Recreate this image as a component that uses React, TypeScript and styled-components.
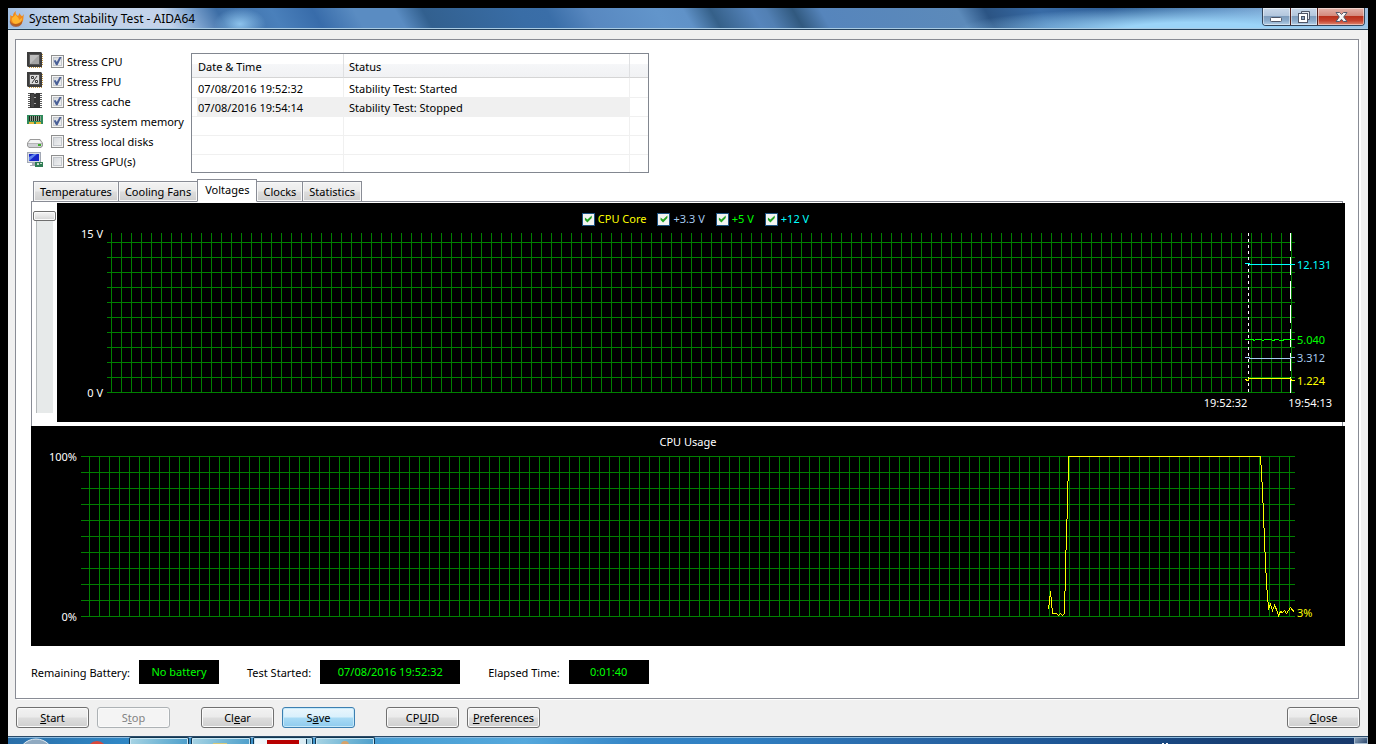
import React, { useState } from "react";
import styled, { createGlobalStyle, css } from "styled-components";

const uiFont = '"Noto Sans", "Open Sans", "Liberation Sans", sans-serif';
const green = "#008000";
const edge = "#898c95";

const GlobalStyle = createGlobalStyle`
  * { box-sizing: border-box; }
  body {
    margin: 0;
    background: #000;
    font: 11px/16px ${uiFont};
    color: #000;
  }
  button, input, table { font: inherit; color: inherit; }
`;

const Desktop = styled.div`
  padding: 8px 8px 0;
`;

const Window = styled.main`
  background: #f0f0f0;
`;

const TitleBar = styled.header`
  display: flex;
  align-items: flex-start;
  justify-content: space-between;
  height: 22px;
  padding: 0 3px 0 1px;
  border-bottom: 1px solid #24415c;
  box-shadow: inset 0 -1px #a9cbe3;
  background:
    radial-gradient(ellipse 26px 16px at 232px 16px, #8cc2ec, transparent),
    radial-gradient(ellipse 240px 22px at calc(100% - 170px) 100%, #9bd4f8 30%, transparent) no-repeat,
    linear-gradient(60deg, #9dbbe0 0%, #c3d3ea 4%, #c3d3ea 12%, #7ea4d0 14%, #3d6ea6 16%, #4a80bb 20%,
      #386caa 23%, #5a8cc2 26%, #5a8cc2 29%, #32608f 31%, #396da6 38%, #3a6ea8 40%, #5888c0 43%,
      #6295cb 48%, #6092c8 50%, #356089 52%, #5685bc 55%, #5280b4 56%, #31597f 58%, #5685bc 60%,
      #5c8aba 70%, #2b5484 72%, #386ba6 76%, #2f5f98 81%, #36689e 83%, #5d8dc0 89%, #7ea8d4 93%, #9fbfe0 100%);
`;

const Caption = styled.div`
  display: flex;
  align-items: center;
  gap: 5px;
  padding-top: 3px;

  h1 { margin: 0; font: 12px/16px ${uiFont}; }
`;

const CaptionButtons = styled.div`
  display: flex;
  height: 18px;
  border: 1px solid #33465c;
  border-top: 0;
  border-radius: 0 0 4px 4px;
  overflow: hidden;
`;

const CaptionButton = styled.button<{ $close?: boolean }>`
  display: flex;
  align-items: center;
  justify-content: center;
  width: ${(p) => (p.$close ? 47 : 27)}px;
  padding: 0;
  border: 0;
  box-shadow: inset 0 0 0 1px rgba(255, 255, 255, 0.45);
  background: ${(p) =>
    p.$close
      ? "linear-gradient(#e3b3aa, #d48a7d 45%, #b8301b 50%, #c5432e 75%, #e08b74)"
      : "linear-gradient(#c9d8ea, #b3c7dd 45%, #7f9dbd 50%, #8caccb 75%, #b6d1e8)"};

  & + & { border-left: 1px solid ${(p) => (p.$close ? "#53201c" : "#4a5f78")}; }
`;

const Panel = styled.section`
  margin: 9px 9px 0 7px;
  padding: 11px 13px 14px 15px;
  border: 1px solid ${edge};
  background: #fff;
  box-shadow: 2px 1px #fff;
`;

const TopRow = styled.div`
  display: flex;
  align-items: flex-end;
`;

const StressList = styled.ul`
  width: 164px;
  margin: 0 0 2px -4px;
  padding: 0;
  list-style: none;
`;

const StressItem = styled.li`
  display: flex;
  align-items: center;
  height: 20px;
  gap: 8px;
  white-space: nowrap;

  label { display: flex; align-items: center; gap: 3px; }
  span { padding-top: 1px; }
  svg { flex: none; }
`;

const Tick = styled.input`
  position: relative;
  flex: none;
  appearance: none;
  width: 13px;
  height: 13px;
  margin: 0;
  border: 1px solid #8e8f8f;
  background: linear-gradient(135deg, #cfd3d8, #f6f6f6);
  box-shadow: inset 0 0 0 1px #f4f4f4, inset 0 0 0 2px #c3c7cc;

  &:checked::after {
    content: "";
    position: absolute;
    inset: 1px;
    background: #4a5f97;
    clip-path: polygon(8% 48%, 28% 40%, 42% 62%, 74% 4%, 96% 4%, 50% 98%, 34% 98%);
  }
`;

const ChartTick = styled(Tick)`
  border-color: #1c5180;
  background: #f3f3f1;
  box-shadow: none;

  &:checked::after {
    background: #21a121;
    clip-path: polygon(12% 34%, 40% 56%, 88% 12%, 88% 40%, 40% 88%, 12% 62%);
  }
`;

const LogFrame = styled.div`
  width: 458px;
  height: 120px;
  border: 1px solid #828790;
  overflow: hidden;
`;

const LogTable = styled.table`
  width: 100%;
  border-collapse: separate;
  border-spacing: 0;
  table-layout: fixed;

  th {
    height: 24px;
    padding: 2px 6px 0;
    font-weight: normal;
    text-align: left;
    border-right: 1px solid #dfe0e2;
    border-bottom: 1px solid #d5d5d5;
    background: linear-gradient(#fff 42%, #f5f6f8 46%, #f1f2f4);
  }
  td {
    height: 19px;
    padding: 2px 6px 0;
    border-right: 1px solid #f0f0f0;
    border-bottom: 1px solid #f0f0f0;
    line-height: 16px;
  }
  tbody tr:first-child td { height: 20px; padding-top: 3px; }
  th + th, td + td { padding-left: 5px; }
  th:last-child, td:last-child { border-right: 0; }
`;

const LogRow = styled.tr<{ $selected?: boolean }>`
  ${(p) =>
    p.$selected &&
    css`
      td:not(:last-child) { background: #f0f0f0; }
      td:first-child { background: linear-gradient(to right, #fff 5px, #f0f0f0 5px); }
    `}
`;

const TabBar = styled.div`
  display: flex;
  align-items: flex-end;
  height: 23px;
  margin: 6px 0 -1px;
  padding-left: 2px;
`;

const Tab = styled.button<{ $active?: boolean }>`
  position: relative;
  height: ${(p) => (p.$active ? 23 : 21)}px;
  padding: ${(p) => (p.$active ? "0 7px 2px" : "0 6px")};
  border: 1px solid ${edge};
  border-bottom-color: ${(p) => (p.$active ? "#fff" : edge)};
  z-index: ${(p) => (p.$active ? 1 : 0)};
  background: ${(p) => (p.$active ? "#fff" : "linear-gradient(#f3f3f3, #ebebeb 48%, #dddddd 52%, #cfcfcf)")};
  box-shadow: ${(p) => (p.$active ? "none" : "inset 0 0 0 1px #f8f8f8")};
  line-height: 19px;
  white-space: nowrap;

  & + & { margin-left: -1px; }
`;

const TabPane = styled.div`
  display: flex;
  align-items: flex-start;
  margin-right: 2px;
  padding: 1px 0 4px 1px;
  border: 1px solid ${edge};
  border-bottom: 0;
`;

const Scale = styled.input`
  flex: none;
  appearance: none;
  writing-mode: vertical-lr;
  width: 23px;
  height: 202px;
  margin: 8px 1px 0 0;
  background: linear-gradient(#b4b8ba, #b4b8ba) 3px 0 / 1px 100% no-repeat,
    linear-gradient(#e7eaea, #e7eaea) 4px 0 / 16px 100% no-repeat;

  &::-webkit-slider-thumb {
    appearance: none;
    width: 23px;
    height: 10px;
    border: 1px solid #6f6f6f;
    border-radius: 2px;
    background: linear-gradient(#f4f4f4, #e6e6e6 50%, #d2d2d2);
    box-shadow: inset 0 0 0 1px #fafafa;
  }
`;

const Chart = styled.figure`
  flex: 1;
  display: grid;
  grid-template-columns: 50px minmax(0, 1fr) 50px;
  margin: 0;
  background: #000;
  color: #fff;
`;

const VoltageChart = styled(Chart)`
  height: 219px;
  margin-right: -3px;
  grid-template-rows: 23px 175px 1fr;
`;

const UsageChart = styled(Chart)`
  height: 220px;
  grid-template-rows: 23px 176px 1fr;
`;

const ChartHead = styled.figcaption`
  grid-column: 1 / -1;
  display: flex;
  justify-content: center;
  padding-top: 8px;
`;

const LegendItem = styled.label<{ $color: string }>`
  display: flex;
  align-items: center;
  gap: 3px;
  height: 16px;
  margin-right: 11px;
  color: ${(p) => p.$color};
`;

const Axis = styled.div`
  display: flex;
  flex-direction: column;
  justify-content: space-between;
  padding-right: 4px;
  text-align: right;
`;

const Plot = styled.div<{ $step: number; $phase: number }>`
  display: flex;
  justify-content: flex-end;
  margin: 7px 0 8px;
  background:
    linear-gradient(to top, ${green} 1px, transparent 1px) left bottom / 100% ${(p) => p.$step}px,
    linear-gradient(to left, ${green} 1px, transparent 1px) right ${(p) => p.$phase}px top / 10px 100%;

  svg { flex: none; display: block; overflow: visible; }
  text { font: 11px ${uiFont}; }
`;

const Times = styled.div`
  grid-column: 1 / -1;
  display: flex;
  justify-content: flex-end;
  gap: 41px;
  margin-top: -5px;
  padding-right: 13px;
  line-height: 14px;
`;

const StatusRow = styled.dl`
  display: flex;
  align-items: center;
  gap: 28px;
  margin: 14px 0 0;
`;

const StatusItem = styled.div`
  display: flex;
  align-items: center;
  gap: 9px;
  white-space: nowrap;

  dt { padding-top: 1px; }
`;

const StatusValue = styled.dd<{ $wide?: boolean }>`
  width: ${(p) => (p.$wide ? 140 : 80)}px;
  margin: 0;
  background: #000;
  color: #0f0;
  line-height: 24px;
  text-align: center;
`;

const Footer = styled.footer`
  display: flex;
  gap: 31px;
  padding: 8px;
`;

const ButtonPair = styled.div`
  display: flex;
  gap: 8px;

  &:last-child { margin-left: auto; }
`;

const PushButton = styled.button<{ $hot?: boolean }>`
  width: 73px;
  height: 21px;
  padding: 0;
  border: 1px solid ${(p) => (p.$hot ? "#3c7fb1" : "#707070")};
  border-radius: 3px;
  background: ${(p) =>
    p.$hot
      ? "linear-gradient(#eaf6fd, #d9f0fc 48%, #a9dbf5 52%, #8fcbee)"
      : "linear-gradient(#f2f2f2, #ebebeb 48%, #dddddd 52%, #cfcfcf)"};
  box-shadow: inset 0 0 0 1px ${(p) => (p.$hot ? "#c5e9fa" : "#fafafa")};
  line-height: 19px;

  &:disabled {
    border-color: #adb2b5;
    background: #f4f4f4;
    color: #838383;
  }
`;

const Taskbar = styled.nav`
  display: flex;
  height: 8px;
  overflow: hidden;
  border-top: 1px solid #2a4a68;
  box-shadow: inset 0 1px #8dbbe0;
  background: linear-gradient(to right, #2a6ea8, #2f86c4 8%, #4a9fd3 28%, #55a8dc 38%, #3585c6 46%,
    #2f7fc2 54%, #2a68a8 66%, #1d5594 78%, #173f74 90%, #17386a);
`;

const StartArea = styled.div`
  width: 121px;

  svg { display: block; }
`;

const TaskButton = styled.div<{ $active?: boolean }>`
  display: flex;
  justify-content: center;
  width: 60px;
  margin-right: 2px;
  border: 1px solid #12364f;
  border-bottom: 0;
  border-radius: 2px 2px 0 0;
  box-shadow: inset 1px 1px #c8e6f5, inset -1px 0 #c8e6f5;
  background: ${(p) =>
    p.$active
      ? "linear-gradient(to right, #f2f8fb, #d9ecf4 52px, #12364f 52px, #12364f 53px, #9ccbe0 53px)"
      : "linear-gradient(100deg, #a8d4e4, #6fb4d4 60%, #4f9fcb)"};
`;

const TrayArea = styled.div`
  display: flex;
  justify-content: space-between;
  width: 210px;
  margin-left: auto;
`;

const ShowDesktop = styled.div`
  width: 14px;
  border: 1px solid #a8bccf;
  background: linear-gradient(135deg, #8aa0b8, #2e4a70);
`;

const Flame = () => (
  <svg width="15" height="16" viewBox="0 0 15 16" aria-hidden="true">
    <path d="M1 4C2 5 3 5 4 5C4 3 5 1 7 0C6 2 7 4 9 5C10 4 10 3 10 2C12 4 12 5 13 5C14 5 14 4 15 3C14 6 15 9 13 12C11 16 4 16 2 12C0 9 2 7 1 4Z" fill="#f08a1d" />
    <path d="M3 7C5 6 6 4 7 3C7 6 10 6 10 9C12 8 12 7 13 7C13 10 12 13 9 13C5 14 2 10 3 7Z" fill="#ffb52e" />
    <path d="M1 9C2 13 6 14 10 12C12 11 13 10 13 9C14 13 11 16 7 16C3 16 0 13 1 9Z" fill="#a0481a" opacity=".7" />
  </svg>
);

const CpuIcon = ({ fpu }: { fpu?: boolean }) => (
  <svg width="16" height="18" viewBox="0 0 16 18" aria-hidden="true">
    <path d="M0 0H14L15 1V15H1L0 14Z" fill="#3d3d3d" />
    <path d="M15.500 2V14M2 15.500H15" stroke="#c69b45" strokeDasharray="1 1" />
    <rect x="2" y="2" width="11" height="11" fill="#555" />
    <rect x="3" y="3" width="9" height="9" fill={fpu ? "#dcdcdc" : "#a4a4a4"} />
    {fpu ? (
      <path d="M10 4L5 11M4.500 4.500H6.500V6.500H4.500ZM8.500 8.500H10.500V10.500H8.500Z" stroke="#3a3a3a" fill="none" />
    ) : (
      <path d="M3 12V3H12L3 12Z" fill="#bdbdbd" />
    )}
  </svg>
);

const CacheIcon = () => (
  <svg width="16" height="18" viewBox="0 0 16 18" aria-hidden="true">
    <path d="M2 1V16M14 1V16" stroke="#5a5a5a" strokeWidth="2" strokeDasharray="1 1" />
    <path d="M3 1H13V16H3Z" fill="#333" />
    <path d="M4 2H7V15H4Z" fill="#454545" />
    <path d="M7 1H9V2H7ZM7 5H9V6H7ZM7 11H9V12H7Z" fill="#aaa" />
  </svg>
);

const MemoryIcon = () => (
  <svg width="16" height="18" viewBox="0 0 16 18" aria-hidden="true">
    <rect y="3" width="16" height="9" fill="#2f8a5b" />
    <rect x="2" y="4" width="12" height="5" fill="#8fa593" />
    <path d="M2.500 4V9M4.500 4V9M6.500 4V9M8.500 4V9M10.500 4V9M12.500 4V9" stroke="#20281f" />
    <path d="M2 10H7V12H2ZM9 10H14V12H9Z" fill="#e0b83a" />
  </svg>
);

const DiskIcon = () => (
  <svg width="16" height="18" viewBox="0 0 16 18" aria-hidden="true">
    <path d="M3 7H13L16 11V14L14 16H2L0 14V11Z" fill="#9a9a9a" />
    <path d="M3.500 8H12.500L15 11H1Z" fill="#f4f4f4" />
    <path d="M1 11.500H15V13.500L13.500 15H2L1 13.500Z" fill="#cfd0d4" />
    <rect x="11" y="12" width="3" height="2" fill="#3fae2a" />
  </svg>
);

const GpuIcon = () => (
  <svg width="16" height="18" viewBox="0 0 16 18" aria-hidden="true">
    <rect x=".5" y=".5" width="13" height="10" fill="#d8dce4" stroke="#a3a9b5" />
    <rect x="2" y="2" width="10" height="7" fill="#1726c8" />
    <path d="M2 9V5L7 2H10Z" fill="#5f86f0" />
    <path d="M5 11H9V13H11V14H3V13H5Z" fill="#a7abb3" />
    <rect x="8" y="10" width="8" height="5" fill="#2f7d54" />
    <path d="M10 11H12V13H10ZM13 11H15V12H13Z" fill="#c9ddcf" />
  </svg>
);

const stressOptions = [
  { label: "Stress CPU", icon: <CpuIcon />, on: true },
  { label: "Stress FPU", icon: <CpuIcon fpu />, on: true },
  { label: "Stress cache", icon: <CacheIcon />, on: true },
  { label: "Stress system memory", icon: <MemoryIcon />, on: true },
  { label: "Stress local disks", icon: <DiskIcon />, on: false },
  { label: "Stress GPU(s)", icon: <GpuIcon />, on: false },
];

const log = [
  { time: "07/08/2016 19:52:32", status: "Stability Test: Started" },
  { time: "07/08/2016 19:54:14", status: "Stability Test: Stopped" },
  { time: "", status: "" },
  { time: "", status: "" },
  { time: "", status: "" },
];

const tabs = ["Temperatures", "Cooling Fans", "Voltages", "Clocks", "Statistics"];

const rails = [
  { name: "CPU Core", color: "#ffff00", value: "1.224", y: 152, points: "0,146 1,146 2,147 3,147 4,145 45,145 46,146 47,147 50,147" },
  { name: "+3.3 V", color: "#a6caf0", value: "3.312", y: 129, points: "0,124 4,124 5,125 45,125 46,124 50,124" },
  { name: "+5 V", color: "#00ff00", value: "5.040", y: 111, points: "0,106 8,106 9,107 11,106 16,106 18,107 20,106 26,106 28,107 31,106 37,107 40,106 50,106" },
  { name: "+12 V", color: "#00ffff", value: "12.131", y: 36, points: "0,30 4,30 5,31 50,31" },
];

const usagePoints =
  "13,153 15,135 17,157 21,157 23,159 25,157 27,159 29,157 30,114 31,75 32,51 33,0 225,0 227,34 229,84 231,127 233,152 235,148 237,154 239,149 241,153 243,159 245,155 247,156 249,154 251,157 255,151 259,156";

export default function App() {
  const [active, setActive] = useState("Voltages");

  return (
    <>
      <GlobalStyle />
      <Desktop>
        <Window>
          <TitleBar>
            <Caption>
              <Flame />
              <h1>System Stability Test - AIDA64</h1>
            </Caption>
            <CaptionButtons>
              <CaptionButton aria-label="Minimize">
                <svg width="13" height="12" viewBox="0 0 13 12">
                  <rect x=".5" y="6.500" width="11" height="4" rx="1" fill="#fff" stroke="#4f5667" />
                </svg>
              </CaptionButton>
              <CaptionButton aria-label="Restore">
                <svg width="12" height="12" viewBox="0 0 12 12">
                  <path d="M3.500 .5H11.500V8.500H9M3.500 .5V3" fill="#e8edf3" stroke="#4f5667" />
                  <rect x=".5" y="2.500" width="9" height="9" fill="#fff" stroke="#4f5667" />
                  <rect x="3.500" y="5.500" width="3" height="3" fill="#8fa6c0" stroke="#4f5667" />
                </svg>
              </CaptionButton>
              <CaptionButton $close aria-label="Close window">
                <svg width="13" height="12" viewBox="0 0 13 12">
                  <path d="M1 1.500H4.500L6.500 3.500L8.500 1.500H12L8.700 6L12 10.500H8.500L6.500 8.300L4.500 10.500H1L4.300 6Z" fill="#f5f5f5" stroke="#555a6b" />
                </svg>
              </CaptionButton>
            </CaptionButtons>
          </TitleBar>

          <Panel>
            <TopRow>
              <StressList>
                {stressOptions.map((o) => (
                  <StressItem key={o.label}>
                    {o.icon}
                    <label>
                      <Tick type="checkbox" defaultChecked={o.on} />
                      <span>{o.label}</span>
                    </label>
                  </StressItem>
                ))}
              </StressList>
              <LogFrame>
                <LogTable>
                  <colgroup>
                    <col width="152" />
                    <col width="286" />
                    <col />
                  </colgroup>
                  <thead>
                    <tr>
                      <th>Date &amp; Time</th>
                      <th>Status</th>
                      <th aria-label="Spare" />
                    </tr>
                  </thead>
                  <tbody>
                    {log.map((row, i) => (
                      <LogRow key={i} $selected={i === 1}>
                        <td>{row.time}</td>
                        <td>{row.status}</td>
                        <td />
                      </LogRow>
                    ))}
                  </tbody>
                </LogTable>
              </LogFrame>
            </TopRow>

            <TabBar role="tablist">
              {tabs.map((t) => (
                <Tab key={t} role="tab" aria-selected={t === active} $active={t === active} onClick={() => setActive(t)}>
                  {t}
                </Tab>
              ))}
            </TabBar>
            <TabPane role="tabpanel">
              <Scale type="range" min="0" max="10" defaultValue="0" aria-label="Graph scale" />
              <VoltageChart>
                <ChartHead>
                  {rails.map((r) => (
                    <LegendItem key={r.name} $color={r.color}>
                      <ChartTick type="checkbox" defaultChecked />
                      {r.name}
                    </LegendItem>
                  ))}
                </ChartHead>
                <Axis>
                  <span>15 V</span>
                  <span>0 V</span>
                </Axis>
                <Plot $step={15} $phase={3}>
                  <svg width="50" height="160" viewBox="0 0 50 160" fill="none">
                    <path d="M3.500 0V160" stroke="#fff" strokeDasharray="3 3" />
                    <path d="M45.500 0V160" stroke="#fff" strokeDasharray="18 6" />
                    {rails.map((r) => (
                      <g key={r.name}>
                        <polyline points={r.points} stroke={r.color} transform="translate(0 .5)" shapeRendering="crispEdges" />
                        <text x="52" y={r.y} fill={r.color}>{r.value}</text>
                      </g>
                    ))}
                  </svg>
                </Plot>
                <Times>
                  <time>19:52:32</time>
                  <time>19:54:13</time>
                </Times>
              </VoltageChart>
            </TabPane>

            <UsageChart>
              <ChartHead>CPU Usage</ChartHead>
              <Axis>
                <span>100%</span>
                <span>0%</span>
              </Axis>
              <Plot $step={16} $phase={5}>
                <svg width="260" height="161" viewBox="0 0 260 161" fill="none">
                  <polyline points={usagePoints} stroke="#ffff00" transform="translate(.5 .5)" shapeRendering="crispEdges" />
                  <text x="262" y="161" fill="#ffff00">3%</text>
                </svg>
              </Plot>
            </UsageChart>

            <StatusRow>
              <StatusItem>
                <dt>Remaining Battery:</dt>
                <StatusValue>No battery</StatusValue>
              </StatusItem>
              <StatusItem>
                <dt>Test Started:</dt>
                <StatusValue $wide>07/08/2016 19:52:32</StatusValue>
              </StatusItem>
              <StatusItem>
                <dt>Elapsed Time:</dt>
                <StatusValue>0:01:40</StatusValue>
              </StatusItem>
            </StatusRow>
          </Panel>

          <Footer>
            <ButtonPair>
              <PushButton><u>S</u>tart</PushButton>
              <PushButton disabled>S<u>t</u>op</PushButton>
            </ButtonPair>
            <ButtonPair>
              <PushButton>Cl<u>e</u>ar</PushButton>
              <PushButton $hot>S<u>a</u>ve</PushButton>
            </ButtonPair>
            <ButtonPair>
              <PushButton>CP<u>U</u>ID</PushButton>
              <PushButton><u>P</u>references</PushButton>
            </ButtonPair>
            <ButtonPair>
              <PushButton><u>C</u>lose</PushButton>
            </ButtonPair>
          </Footer>
        </Window>

        <Taskbar aria-label="Taskbar">
          <StartArea>
            <svg width="121" height="7" viewBox="0 0 121 7" aria-hidden="true">
              <circle cx="28" cy="20" r="18" fill="#8fa9c0" stroke="#dfeaf2" />
              <circle cx="89" cy="14" r="10" fill="#d9483b" />
            </svg>
          </StartArea>
          <TaskButton />
          <TaskButton>
            <svg width="16" height="6" aria-hidden="true"><rect y="5" width="14" height="2" fill="#d8c877" /></svg>
          </TaskButton>
          <TaskButton $active>
            <svg width="32" height="6" aria-hidden="true"><rect y="2" width="32" height="4" fill="#b80000" /></svg>
          </TaskButton>
          <TaskButton>
            <svg width="16" height="6" aria-hidden="true"><circle cx="8" cy="7" r="4" fill="#d6a26a" /></svg>
          </TaskButton>
          <TrayArea>
            <svg width="20" height="7" aria-hidden="true"><path d="M4 6.500H6M8 6.500H10" stroke="#fff" /></svg>
            <ShowDesktop />
          </TrayArea>
        </Taskbar>
      </Desktop>
    </>
  );
}
